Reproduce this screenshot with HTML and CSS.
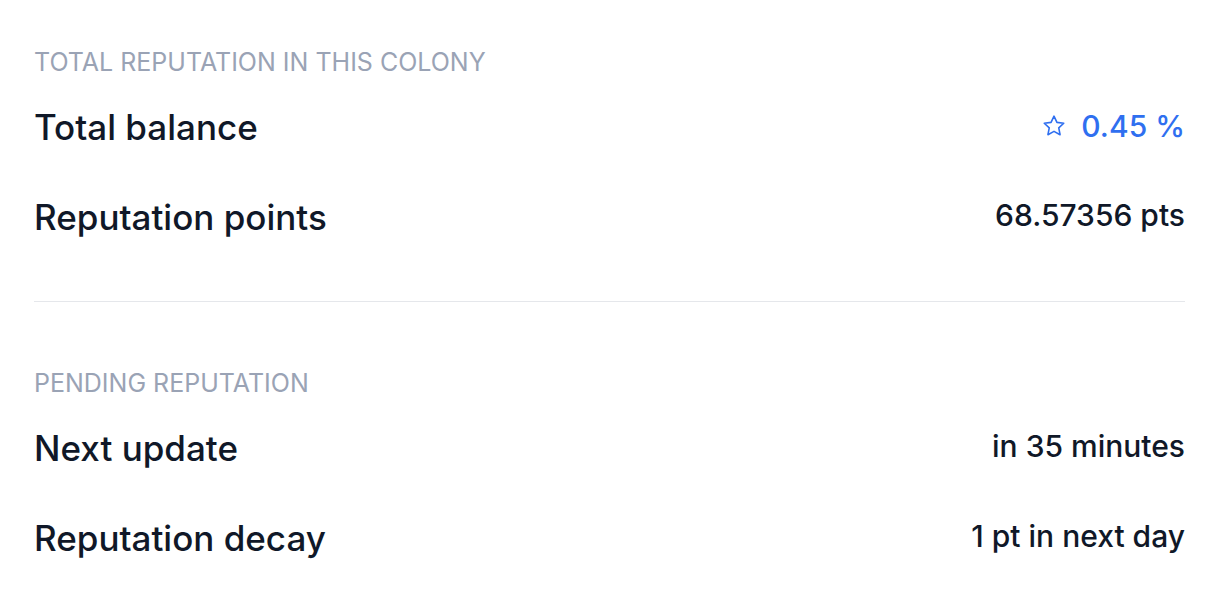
FILE: index.html
```html
<!DOCTYPE html>
<html lang="en">
<head>
<meta charset="utf-8">
<title>Reputation</title>
<link rel="stylesheet" href="styles.css">
</head>
<body>
<main class="panel">
  <section class="group group-first">
    <h2 class="group-title">Total reputation in this colony</h2>
    <div class="row">
      <span class="label">Total balance</span>
      <span class="value value-accent">
        <svg class="star" viewBox="0 0 24 24" width="24" height="24" aria-hidden="true">
          <path d="M12 2.2l2.95 6.2 6.8.85-5 4.7 1.3 6.75L12 17.35l-6.05 3.35 1.3-6.75-5-4.7 6.8-.85z" fill="none" stroke="currentColor" stroke-width="1.6" stroke-linejoin="round"/>
        </svg>
        0.45 %
      </span>
    </div>
    <div class="row">
      <span class="label">Reputation points</span>
      <span class="value">68.57356 pts</span>
    </div>
  </section>
  <section class="group group-second">
    <h2 class="group-title">Pending reputation</h2>
    <div class="row">
      <span class="label">Next update</span>
      <span class="value">in 35 minutes</span>
    </div>
    <div class="row">
      <span class="label">Reputation decay</span>
      <span class="value">1 pt in next day</span>
    </div>
  </section>
</main>
</body>
</html>
```

FILE: styles.css
```css
* {
  box-sizing: border-box;
}

html, body {
  margin: 0;
  background: #ffffff;
}

body {
  font-family: Inter, "Noto Sans", sans-serif;
  color: #111827;
}

.panel {
  padding: 46px 39px 0 34px;
}

.group {
  display: flex;
  flex-direction: column;
}

.group-first {
  padding-bottom: 39px;
  border-bottom: 1px solid #e5e7eb;
}

.group-second {
  padding-top: 65px;
}

.group-title {
  margin: 0 0 4px;
  font-size: 25px;
  line-height: 32px;
  font-weight: 400;
  text-transform: uppercase;
  color: #9aa3b5;
}

.row {
  display: flex;
  align-items: center;
  justify-content: space-between;
  height: 90px;
}

.label {
  font-size: 35px;
  line-height: 46px;
  font-weight: 500;
  color: #101828;
}

.value {
  display: flex;
  align-items: center;
  gap: 15px;
  font-size: 30px;
  line-height: 40px;
  font-weight: 500;
  color: #101828;
  margin-top: -4px;
}

.value-accent {
  color: #2f6ff0;
  margin-top: -2px;
}

.star {
  display: block;
}
```
